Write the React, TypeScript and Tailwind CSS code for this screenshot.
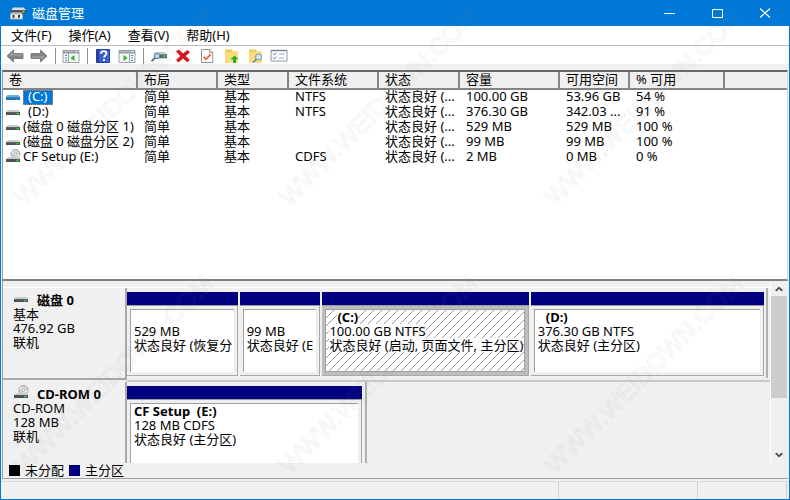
import type { ReactNode } from "react";

const MENUS = ["文件(F)", "操作(A)", "查看(V)", "帮助(H)"];

const COLUMNS = [
  { label: "卷", width: "w-[135px]" },
  { label: "布局", width: "w-[80px]" },
  { label: "类型", width: "w-[71px]" },
  { label: "文件系统", width: "w-[90px]" },
  { label: "状态", width: "w-[81px]" },
  { label: "容量", width: "w-[100px]" },
  { label: "可用空间", width: "w-[70px]" },
  { label: "% 可用", width: "w-[95px]" },
  { label: "", width: "" },
];

const VOLUMES = [
  { name: "(C:)", letter: true, selected: true, cells: ["简单", "基本", "NTFS", "状态良好 (...", "100.00 GB", "53.96 GB", "54 %"] },
  { name: "(D:)", letter: true, cells: ["简单", "基本", "NTFS", "状态良好 (...", "376.30 GB", "342.03 ...", "91 %"] },
  { name: "(磁盘 0 磁盘分区 1)", cells: ["简单", "基本", "", "状态良好 (...", "529 MB", "529 MB", "100 %"] },
  { name: "(磁盘 0 磁盘分区 2)", cells: ["简单", "基本", "", "状态良好 (...", "99 MB", "99 MB", "100 %"] },
  { name: "CF Setup (E:)", cd: true, cells: ["简单", "基本", "CDFS", "状态良好 (...", "2 MB", "0 MB", "0 %"] },
];

type PartitionInfo = {
  title: string;
  size: string;
  status: string;
  grow: string;
  selected?: boolean;
  labelled?: boolean;
};

type DiskInfo = {
  name: string;
  cd?: boolean;
  lines: string[];
  track: string;
  partitions: PartitionInfo[];
};

const DISKS: DiskInfo[] = [
  {
    name: "磁盘 0",
    lines: ["基本", "476.92 GB", "联机"],
    track: "h-[90px] w-[641px] pr-0.5",
    partitions: [
      { title: "", size: "529 MB", status: "状态良好 (恢复分", grow: "flex-[111_1_0px]" },
      { title: "", size: "99 MB", status: "状态良好 (E", grow: "flex-[81_1_0px]" },
      { title: "(C:)", size: "100.00 GB NTFS", status: "状态良好 (启动, 页面文件, 主分区)", grow: "flex-[207_1_0px]", selected: true },
      { title: "(D:)", size: "376.30 GB NTFS", status: "状态良好 (主分区)", grow: "flex-[234_1_0px]" },
    ],
  },
  {
    name: "CD-ROM 0",
    cd: true,
    lines: ["CD-ROM", "128 MB", "联机"],
    track: "h-[94px] w-[240px] pr-[3px]",
    partitions: [
      { title: "CF Setup  (E:)", labelled: true, size: "128 MB CDFS", status: "状态良好 (主分区)", grow: "flex-1" },
    ],
  },
];

function DriveIcon({ cd, selected }: { cd?: boolean; selected?: boolean }) {
  return (
    <svg className="mb-1 h-3.5 w-4 shrink-0" viewBox="0 0 16 14" aria-hidden="true">
      {cd && (
        <>
          <circle cx="10.5" cy="5" r="4.5" fill="#d6d9d8" stroke="#8f9492" strokeWidth="0.8" />
          <path d="M10.5 5 7 2.5M10.5 5l3.8 1.8" stroke="#f7f7f7" strokeWidth="1.4" />
          <circle cx="10.5" cy="5" r="1.4" fill="#fff" stroke="#8f9492" strokeWidth="0.7" />
        </>
      )}
      {cd ? (
        <g>
          <path d="M3 8h10l2 2H1z" fill="#c8cccd" />
          <path d="M1 10h14v3H1z" fill="#4c5153" />
          <path d="M11.5 10.6h2v1.8h-2z" fill="#2fe24a" />
        </g>
      ) : (
        <g>
          <path d="M2.5 6h11L15 8H1z" fill={selected ? "#68add9" : "#c8cccd"} />
          <path d="M1 8h14v3H1z" fill={selected ? "#1b6eaf" : "#4c5153"} />
          <path d="M2 8.8h8" stroke={selected ? "#5caee8" : "#777c7e"} strokeWidth="0.6" />
          <path d="M11.5 8.6h2v1.8h-2z" fill={selected ? "#39a7c0" : "#2fe24a"} />
        </g>
      )}
    </svg>
  );
}

function AppIcon() {
  return (
    <svg className="h-4 w-[17px]" viewBox="0 0 17 16" aria-hidden="true">
      <path d="M4 2.5h10.5L17 5v1H2z" fill="#d9dcdd" />
      <path d="M2 5.2h15v3.6H2z" fill="#3f4749" />
      <path d="M13.3 6h2.2v1.8h-2.2z" fill="#42e64f" />
      <path d="M1 9 3 7h9l2 2v5.5H1z" fill="#a9adaf" />
      <path d="M2 9.3h11v4.2H2z" fill="#eceeee" />
      <path d="M3.5 10h2v2.7h-2zM9 10h2v2.7H9z" fill="#343a3c" />
    </svg>
  );
}

function ArrowIcon({ forward }: { forward?: boolean }) {
  return (
    <svg className={forward ? "h-4 w-[18px] rotate-180" : "h-4 w-[18px]"} viewBox="0 0 18 16" aria-hidden="true">
      <path d="M1 8 7.5 2v3.5H17v5H7.5V14z" fill="#858585" stroke="#6d6d6d" strokeWidth="0.8" />
      <path d="M3 7.6 6.8 4.3v2h9.3v1.3z" fill="#a6a6a6" />
    </svg>
  );
}

function PaneIcon({ right }: { right?: boolean }) {
  return (
    <svg className="h-4 w-[18px]" viewBox="0 0 18 16" aria-hidden="true">
      <path d="M1 2.5h16v12H1z" fill="#f5f7f8" stroke="#9aa3aa" />
      <path d="M1 2h16v3.5H1z" fill="#949ca3" />
      <path d="M2 3.5h10" stroke="#c3c9cd" strokeWidth="0.8" />
      <path d="M13 3.5h3" stroke="#fff" strokeWidth="0.8" />
      {right ? (
        <>
          <path d="M11.5 5v9.5" stroke="#9aa3aa" />
          <path d="M13 7.5h2M13 10h2M13 12.5h2" stroke="#4b86bd" />
          <path d="m5.5 7 4 3-4 3z" fill="#28b51e" />
        </>
      ) : (
        <>
          <path d="M6.5 5v9.5" stroke="#9aa3aa" />
          <path d="M3 7.5h2M3 10h2M3 12.5h2" stroke="#4b86bd" />
          <path d="M12.5 7v6l-4-3z" fill="#28b51e" />
        </>
      )}
    </svg>
  );
}

function HelpIcon() {
  return (
    <svg className="h-4 w-4" viewBox="0 0 16 16" aria-hidden="true">
      <path d="M1.5 1.5h13v13h-13z" fill="#3a60cf" stroke="#243f9b" />
      <path d="M2 2h2v12H2z" fill="#27479f" />
      <path d="M6 5.8C6 3.9 7.1 3.2 8.7 3.2s2.8.9 2.8 2.4c0 1.8-2.5 2-2.5 4" fill="none" stroke="#fff" strokeWidth="1.8" />
      <path d="M8 11.2h2V13H8z" fill="#fff" />
    </svg>
  );
}

function ScanDiskIcon() {
  return (
    <svg className="h-4 w-4" viewBox="0 0 16 16" aria-hidden="true">
      <path d="M4 4h10l2 2.5H3z" fill="#c6cccf" />
      <path d="M3 6.3h13v4H3z" fill="#596267" />
      <path d="M12 7.3h2.5v2H12z" fill="#32df3e" />
      <circle cx="6" cy="8" r="2.8" fill="#b8d8e9" stroke="#668493" />
      <path d="m4 10-3.5 3.2" stroke="#47708d" strokeWidth="1.8" />
    </svg>
  );
}

function DeleteIcon() {
  return (
    <svg className="h-4 w-4" viewBox="0 0 16 16" aria-hidden="true">
      <path d="m1 3.5 2.7-2L8 5.6 12.5 2 15 4.2 10.6 8l4.2 4-2.5 2.3L8 10.4 3.5 14.5 1 12l4.3-4z" fill="#d5171b" />
    </svg>
  );
}

function CheckDocIcon() {
  return (
    <svg className="h-4 w-4" viewBox="0 0 16 16" aria-hidden="true">
      <path d="M2.5 1.5h8.3l3 3v10H2.5z" fill="#f8f9fa" stroke="#929292" />
      <path d="M10.5 1.5v3.2h3.3" fill="#ddd" stroke="#929292" strokeWidth="0.8" />
      <path d="m4.7 8.8 2.3 2.5 4.7-5" fill="none" stroke="#e46c3c" strokeWidth="1.8" />
    </svg>
  );
}

function FolderIcon({ search }: { search?: boolean }) {
  return (
    <svg className="h-4 w-4" viewBox="0 0 16 16" aria-hidden="true">
      <path d="M2 1.5h7.5v2H15v11H2z" fill="#f0c95f" />
      <path d="M3 4h12v10.5H2V6z" fill="#fbdc7c" />
      {search ? (
        <>
          <circle cx="11.5" cy="9" r="3" fill="#cee9f8" stroke="#7195ad" />
          <path d="m9.3 11.3-3.3 3.2" stroke="#5787b0" strokeWidth="1.7" />
        </>
      ) : (
        <path d="m11.5 7.5 4 3.8H13v3.7h-3v-3.7H7.5z" fill="#22b12b" />
      )}
    </svg>
  );
}

function OptionsIcon() {
  return (
    <svg className="h-4 w-[18px]" viewBox="0 0 18 16" aria-hidden="true">
      <path d="M1 2.5h16v10.5H1z" fill="#fff" stroke="#8b959e" />
      <path d="M1 2.5h16" stroke="#74818c" strokeWidth="1.4" />
      <path d="m3 5.8 1.2 1.2 2.3-2.4M3 9.8 4.2 11l2.3-2.4" fill="none" stroke="#4190cf" />
      <path d="M9 6h5.5M9 10h5.5" stroke="#9aa6b0" />
    </svg>
  );
}

function ToolButton({ label, children }: { label: string; children: ReactNode }) {
  return (
    <button type="button" aria-label={label} className="flex h-5 w-6 items-center justify-center">
      {children}
    </button>
  );
}

function ToolSeparator() {
  return (
    <div className="flex w-2 justify-center">
      <div className="h-4 w-px bg-[#8d8d8d]" />
    </div>
  );
}

function Chevron({ down }: { down?: boolean }) {
  return (
    <svg className={down ? "h-2 w-2 rotate-180" : "h-2 w-2"} viewBox="0 0 8 8" aria-hidden="true">
      <path d="m.7 5.8 3.3-3 3.3 3" fill="none" stroke="#505050" strokeWidth="1.8" />
    </svg>
  );
}

function Partition({ part }: { part: PartitionInfo }) {
  const line = part.selected ? "h-3.5 w-fit bg-white" : "h-3.5";
  return (
    <div className={`flex min-w-0 flex-col ${part.grow}`}>
      <div className="h-3.5 shrink-0 border-b border-[#9a9a9a] bg-[#000080]" />
      <div className={`flex flex-1 border-r border-b border-[#a8a8a8] p-[3px] ${part.selected ? "bg-[#bdbdbd]" : "bg-[#efefef]"}`}>
        <div
          className={`min-w-0 flex-1 border-t border-l border-[#a0a0a0] pl-[3px] leading-[14px] whitespace-pre ${
            part.selected
              ? "border-r border-b bg-[linear-gradient(135deg,#fff_45%,#9c9c9c_45%,#9c9c9c_55%,#fff_55%)] bg-size-[8px_8px]"
              : "bg-white"
          }`}
        >
          <p className={`font-bold ${line} ${part.labelled ? "" : "ml-2"}`}>{part.title}</p>
          <p className={line}>{part.size}</p>
          <p className={line}>{part.status}</p>
        </div>
      </div>
    </div>
  );
}

function Watermark() {
  return (
    <svg className="pointer-events-none absolute inset-0 h-full w-full" aria-hidden="true">
      <defs>
        <pattern id="mark" width="265" height="268" x="8" y="-60" patternUnits="userSpaceOnUse">
          <text
            transform="translate(16 267) rotate(-45)"
            fontSize="25"
            fontFamily="Liberation Sans, sans-serif"
            fill="none"
            stroke="#808080"
            strokeOpacity="0.1"
          >
            WWW.WEIDOWN.COM
          </text>
        </pattern>
      </defs>
      <rect width="100%" height="100%" fill="url(#mark)" />
    </svg>
  );
}

export default function App() {
  return (
    <div className="relative flex h-screen flex-col overflow-hidden border-x border-b border-[#0078d7] bg-[#f0f0f0] font-['Noto_Sans','Noto_Sans_CJK_SC',sans-serif] text-[13px] text-black">
      {/* Title bar */}
      <header className="flex h-[26px] shrink-0 items-center bg-[#0078d7] pl-2 text-white">
        <AppIcon />
        <h1 className="ml-1.5 flex-1 leading-4">磁盘管理</h1>
        <button type="button" aria-label="最小化" className="flex h-full w-12 items-center justify-center">
          <span className="h-px w-[11px] bg-white" />
        </button>
        <button type="button" aria-label="最大化" className="flex h-full w-12 items-center justify-center">
          <span className="h-[9px] w-[11px] border border-white" />
        </button>
        <button type="button" aria-label="关闭" className="flex h-full w-12 items-center justify-center">
          <svg className="h-2.5 w-3" viewBox="0 0 12 10" aria-hidden="true">
            <path d="m1 .5 10 9M11 .5l-10 9" stroke="#fff" strokeWidth="1.2" />
          </svg>
        </button>
      </header>

      {/* Menu */}
      <nav className="flex h-5 shrink-0 items-start gap-px border-b border-[#b9bcc4] bg-white pl-0.5">
        {MENUS.map((menu) => (
          <button key={menu} type="button" className="px-2 leading-[18px]">
            {menu}
          </button>
        ))}
      </nav>

      {/* Toolbar */}
      <div className="flex h-[18px] shrink-0 items-center bg-white pt-0.5 pl-0.5">
        <ToolButton label="后退"><ArrowIcon /></ToolButton>
        <ToolButton label="前进"><ArrowIcon forward /></ToolButton>
        <ToolSeparator />
        <ToolButton label="显示控制台树"><PaneIcon /></ToolButton>
        <ToolSeparator />
        <ToolButton label="帮助"><HelpIcon /></ToolButton>
        <ToolButton label="显示操作窗格"><PaneIcon right /></ToolButton>
        <ToolSeparator />
        <ToolButton label="扫描磁盘"><ScanDiskIcon /></ToolButton>
        <ToolButton label="删除"><DeleteIcon /></ToolButton>
        <ToolButton label="属性"><CheckDocIcon /></ToolButton>
        <ToolButton label="打开"><FolderIcon /></ToolButton>
        <ToolButton label="浏览"><FolderIcon search /></ToolButton>
        <ToolButton label="设置"><OptionsIcon /></ToolButton>
      </div>

      {/* Volume list */}
      <div className="mx-px mt-1.5 min-h-0 flex-1 border-t-2 border-r border-b-2 border-l border-t-[#696969] border-r-[#d8d8d8] border-b-[#808080] border-l-[#9a9a9a] bg-white">
        <table className="w-full table-fixed border-separate border-spacing-0 text-left whitespace-nowrap">
          <thead>
            <tr className="h-[18px]">
              {COLUMNS.map((col) => (
                <th
                  key={col.label}
                  scope="col"
                  className={`border-r-2 border-b-2 border-[#858585] bg-[#f0f0f0] py-0 pl-1.5 align-top leading-[15px] font-normal last:border-r-0 ${col.width}`}
                >
                  {col.label}
                </th>
              ))}
            </tr>
          </thead>
          <tbody>
            {VOLUMES.map((vol) => (
              <tr key={vol.name} className="h-[15px] leading-[13px]">
                <td className="p-0">
                  <div className="flex h-[15px] items-center pl-0.5">
                    <DriveIcon cd={vol.cd} selected={vol.selected} />
                    <span
                      className={`ml-0.5 h-[15px] ${vol.letter ? "px-[5px]" : ""} ${
                        vol.selected ? "bg-[#0078d7] text-white outline-1 -outline-offset-1 outline-[#d98a4a] outline-dotted" : ""
                      }`}
                    >
                      {vol.name}
                    </span>
                  </div>
                </td>
                {vol.cells.map((cell, i) => (
                  <td key={i} className="p-0 pl-1.5 align-top">
                    {cell}
                  </td>
                ))}
                <td className="p-0" />
              </tr>
            ))}
          </tbody>
        </table>
      </div>

      {/* Graphical view */}
      <div className="mx-px flex h-[182px] shrink-0 overflow-hidden border-l border-[#a0a0a0]">
        <div className="mt-1.5 min-w-0 flex-1 overflow-hidden border-t border-white">
          {DISKS.map((disk) => (
            <section key={disk.name} className="flex h-[94px]">
              <div className="flex h-[92px] w-[124px] shrink-0 flex-col border-r-2 border-b-2 border-[#a8a8a8] pt-[5px] pl-2.5 leading-[14px]">
                <h2 className="flex h-3.5 items-center font-bold">
                  <DriveIcon cd={disk.cd} />
                  <span className="ml-2">{disk.name}</span>
                </h2>
                {disk.lines.map((line) => (
                  <p key={line} className="h-3.5">{line}</p>
                ))}
              </div>
              <div className="min-w-0 flex-1 border-b-2 border-[#c9c9c9]">
                <div className={`flex max-w-full gap-0.5 border-r-2 border-[#b0b0b0] pt-1 pb-0.5 ${disk.track}`}>
                  {disk.partitions.map((part) => (
                    <Partition key={part.size} part={part} />
                  ))}
                </div>
              </div>
            </section>
          ))}
        </div>
        <div className="mr-px flex w-[17px] shrink-0 flex-col border-l border-white">
          <button type="button" aria-label="向上滚动" className="flex h-[15px] shrink-0 items-center justify-center">
            <Chevron />
          </button>
          <div className="h-[102px] bg-[#cdcdcd]" />
          <button type="button" aria-label="向下滚动" className="mt-auto flex h-4 shrink-0 items-center justify-center">
            <Chevron down />
          </button>
        </div>
      </div>

      {/* Legend */}
      <div className="mx-px flex h-4 shrink-0 items-start gap-[5px] border-b border-l border-[#a0a0a0] pl-1.5 leading-[14px]">
        <span className="mt-0.5 h-[11px] w-[11px] bg-black" />
        <span>未分配</span>
        <span className="mt-0.5 h-[11px] w-[11px] bg-[#000080]" />
        <span>主分区</span>
      </div>

      {/* Status bar */}
      <footer className="mt-0.5 flex h-[18px] shrink-0 border-t border-[#dadada]">
        <div className="flex-1 border-r border-[#d0d0d0]" />
        <div className="w-[139px] border-r border-[#d0d0d0]" />
        <div className="mr-0.5 w-[89px] border-r border-[#d0d0d0]" />
      </footer>

      <Watermark />
    </div>
  );
}
